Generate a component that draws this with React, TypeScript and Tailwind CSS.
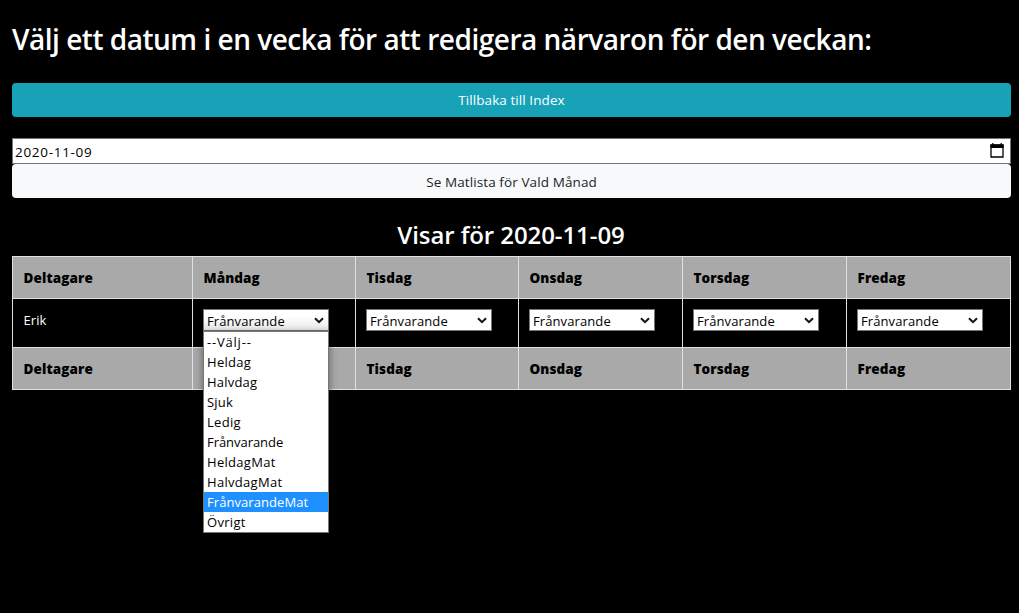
const days = ["Måndag", "Tisdag", "Onsdag", "Torsdag", "Fredag"];
const openDay = "Måndag";

const options = [
  { label: "--Välj--", tracking: "tracking-[0.8px]" },
  { label: "Heldag", tracking: "tracking-[0.3px]" },
  { label: "Halvdag", tracking: "tracking-[0.2px]" },
  { label: "Sjuk", tracking: "tracking-[0.2px]" },
  { label: "Ledig", tracking: "tracking-[0.3px]" },
  { label: "Frånvarande", tracking: "tracking-[-0.05px]" },
  { label: "HeldagMat", tracking: "tracking-[0.3px]" },
  { label: "HalvdagMat", tracking: "tracking-[0.3px]" },
  { label: "FrånvarandeMat", tracking: "tracking-[0.07px]" },
  { label: "Övrigt", tracking: "tracking-[0.3px]" },
];

function CalendarIcon() {
  return (
    <svg className="h-4 w-[14px]" viewBox="0 0 14 16" fill="none">
      <path d="M1 2h12v12H1z" stroke="#000" strokeWidth="1.3" />
      <path d="M.4 1.4h13.2V5H.4zM2.2 0h1.2v2H2.2zM10.6 0h1.2v2h-1.2z" fill="#000" />
    </svg>
  );
}

function Chevron() {
  return (
    <svg className="h-[7px] w-[10px]" viewBox="0 0 10 7" fill="none">
      <path d="M1 1.2 5 5.2 9 1.2" stroke="#111" strokeWidth="2" />
    </svg>
  );
}

function HeadingRow({ coveredDay }: { coveredDay?: string }) {
  return (
    <>
      {["Deltagare", ...days].map((label) => (
        <div
          key={label}
          className="flex h-[42px] items-center border-r border-b border-[#dee2e6] bg-[#a9a9a9] pl-[10.5px] text-[13.5px] leading-5 font-extrabold tracking-[0.1px] text-black"
        >
          {label !== coveredDay && label}
        </div>
      ))}
    </>
  );
}

function StatusSelect({ open = false }: { open?: boolean }) {
  return (
    <div className="relative h-[22px] w-[126px]">
      <div
        className={`flex h-full items-center justify-between border border-[#767676] pr-1 pl-[3px] text-black ${
          open ? "bg-linear-to-b from-white from-30% to-[#ececec]" : "bg-white"
        }`}
      >
        <span className="pt-[2px] text-[13px] leading-5 tracking-[0.1px]">Frånvarande</span>
        <Chevron />
      </div>
      {open && (
        <ul className="absolute top-[22px] left-0 z-10 w-[126px] border border-[#767676] bg-white text-[13px] leading-5 text-black shadow-[0_2px_8px_rgba(0,0,0,0.45)]">
          {options.map(({ label, tracking }) => (
            <li
              key={label}
              className={`h-5 pl-[3px] whitespace-nowrap ${tracking} ${label === "FrånvarandeMat" ? "bg-[#1e90ff] text-white" : ""}`}
            >
              {label}
            </li>
          ))}
        </ul>
      )}
    </div>
  );
}

export default function App() {
  return (
    <main className="h-[613px] w-[1019px] overflow-hidden bg-black pr-2 pl-3 font-['Open_Sans',sans-serif] text-[13px] text-white">
      <h1 className="pt-[20px] text-[28px] leading-[38px] font-semibold tracking-[-0.485px] whitespace-nowrap">
        Välj ett datum i en vecka för att redigera närvaron för den veckan:
      </h1>
      <button className="mt-[25px] flex h-[34px] w-full items-center justify-center rounded-[4px] bg-[#17a2b8] text-[13.5px] tracking-[0.07px] text-white">
        Tillbaka till Index
      </button>
      <div className="mt-[21px] flex h-[26px] items-center justify-between border border-[#767676] bg-white pr-[6px] pl-[2px] text-black">
        <span className="pt-[2px] text-[13.5px] leading-5 tracking-[0.7px]">2020-11-09</span>
        <CalendarIcon />
      </div>
      <button className="flex h-[34px] w-full items-center justify-center rounded-[4px] bg-[#f8f9fa] pt-[3px] text-[13.5px] tracking-[0.1px] text-[#212529]">
        Se Matlista för Vald Månad
      </button>
      <h2 className="mt-[20px] h-[38px] pr-px text-center text-[24px] leading-[34px] font-semibold tracking-[-0.08px]">
        Visar för 2020-11-09
      </h2>
      <section className="grid grid-cols-[180px_163px_163px_164px_164px_164px] border-t border-l border-[#dee2e6]">
        <HeadingRow />
        <div className="h-[49px] border-r border-b border-[#dee2e6] pt-[11px] pl-[10.5px] leading-5 tracking-[0.1px]">Erik</div>
        {days.map((day) => (
          <div key={day} className="h-[49px] border-r border-b border-[#dee2e6] pt-[10px] pl-[10px]">
            <StatusSelect open={day === openDay} />
          </div>
        ))}
        <HeadingRow coveredDay={openDay} />
      </section>
    </main>
  );
}
